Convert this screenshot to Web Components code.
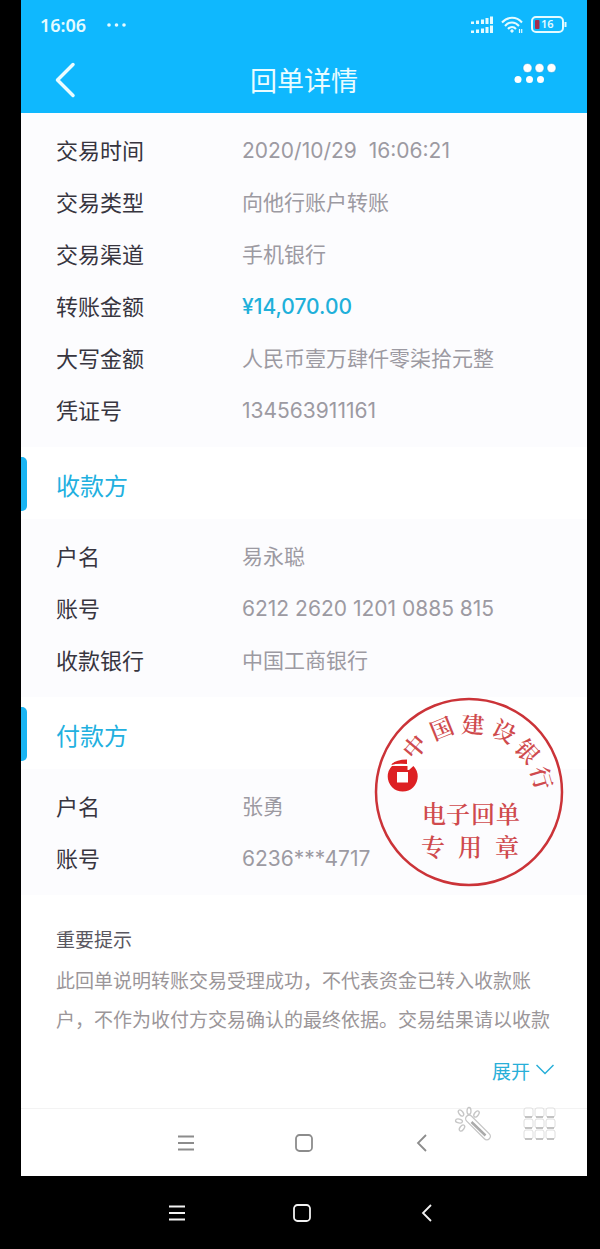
<!DOCTYPE html>
<html lang="zh-CN">
<head>
<meta charset="utf-8">
<meta name="viewport" content="width=device-width, initial-scale=1">
<title>回单详情</title>
<style>
  body {
    margin: 0;
    background: #000;
    font-family: Inter, "Noto Sans CJK SC", sans-serif;
  }
</style>
</head>
<body>
<receipt-app></receipt-app>

<script>
class StatusBar extends HTMLElement {
  constructor() {
    super();
    this.attachShadow({ mode: "open" });
    this.shadowRoot.innerHTML = `
      <style>
        :host {
          display: flex;
          align-items: center;
          height: 50px;
          padding: 0 20px 0 19px;
          color: #e4fbff;
        }
        .time {
          font: 600 18px/24px "Noto Sans", sans-serif;
        }
        .more { margin-left: 20px; }
        .icons {
          display: flex;
          align-items: center;
          gap: 8px;
          margin-left: auto;
        }
        svg { display: block; }
      </style>
      <span class="time">16:06</span>
      <svg class="more" width="20" height="6" viewBox="0 0 20 6" fill="currentColor">
        <circle cx="3" cy="3" r="1.800"/><circle cx="10.500" cy="3" r="1.800"/><circle cx="18" cy="3" r="1.800"/>
      </svg>
      <div class="icons">
        <svg width="22" height="18" viewBox="0 0 22 18" fill="currentColor">
          <path d="M0 5.500h3v2.500h-3zM5 4.500h3v3.500h-3zM10 3.500h3v4.500h-3zM14.500 2h3v6h-3zM19 .5h3v7.500h-3z"/>
          <path d="M0 14.500h3v2.500h-3zM5 13.500h3v3.500h-3zM10 12.500h3v4.500h-3zM14.500 11h3v6h-3zM19 9.500h3v7.500h-3z"/>
        </svg>
        <svg width="22" height="18" viewBox="0 0 22 18" fill="none" stroke="currentColor" stroke-width="2">
          <path d="M1 6.500C6.500 .2 15.500 .2 21 6.500M4 10C8 5.200 14 5.200 18 10M7 13C9.300 10.200 12.700 10.200 15 13"/>
          <circle cx="11" cy="15" r="1.200" fill="currentColor" stroke-width="1"/>
          <path d="M18.500 13v4M20.700 13v4" stroke-width="1.200"/>
        </svg>
        <svg width="36" height="18" viewBox="0 0 36 18">
          <rect x="1" y="1" width="31" height="15" rx="4" fill="none" stroke="currentColor" stroke-width="2"/>
          <path d="M33.500 6h2v5h-2z" fill="currentColor"/>
          <rect x="4" y="4" width="4.500" height="9" rx="1" fill="#a52c4c"/>
          <text x="10" y="12" font-family="Noto Sans, sans-serif" font-weight="600" font-size="11" fill="currentColor">16</text>
        </svg>
      </div>
    `;
  }
}
customElements.define("status-bar", StatusBar);

class TitleBar extends HTMLElement {
  constructor() {
    super();
    this.attachShadow({ mode: "open" });
    this.shadowRoot.innerHTML = `
      <style>
        :host {
          display: grid;
          grid-template-columns: 48px 1fr 48px;
          align-items: center;
          height: 63px;
          padding: 0 28px 0 28px;
          color: #eafcff;
        }
        h1 {
          margin: 0;
          font-size: 27px;
          font-weight: 400;
          line-height: 60px;
          text-align: center;
        }
        button {
          display: flex;
          padding: 0;
          border: 0;
          background: none;
          color: inherit;
        }
        .back { padding: 0 0 4px 6px; }
        .menu { justify-content: flex-end; padding-bottom: 16px; }
      </style>
      <button class="back" type="button" aria-label="返回">
        <svg width="22" height="36" viewBox="0 0 22 36" fill="none" stroke="currentColor" stroke-width="3.500" stroke-linecap="round" stroke-linejoin="round">
          <path d="M18 2.500L2.500 18L18 33.500"/>
        </svg>
      </button>
      <h1><slot></slot></h1>
      <button class="menu" type="button" aria-label="更多">
        <svg width="46" height="24" viewBox="0 0 46 24" fill="#fff">
          <g stroke="#0a92d2" stroke-opacity=".45">
            <circle cx="14.500" cy="6" r="4.500"/><circle cx="26.500" cy="6" r="4.500"/><circle cx="38.500" cy="6" r="4.500"/>
          </g>
          <circle cx="5" cy="17.500" r="3.500"/><circle cx="16.500" cy="17.500" r="3.500"/><circle cx="27.500" cy="17.500" r="3.500"/>
        </svg>
      </button>
    `;
  }
}
customElements.define("title-bar", TitleBar);

class DetailList extends HTMLElement {
  constructor() {
    super();
    this.attachShadow({ mode: "open" });
    this.shadowRoot.innerHTML = `
      <style>
        :host {
          display: block;
          padding: 12px 35px 10px;
          background: #fcfcfe;
        }
        dl { margin: 0; }
      </style>
      <dl><slot></slot></dl>
    `;
  }
}
customElements.define("detail-list", DetailList);

class DetailRow extends HTMLElement {
  constructor() {
    super();
    this.attachShadow({ mode: "open" });
    this.shadowRoot.innerHTML = `
      <style>
        :host {
          display: grid;
          grid-template-columns: 186px 1fr;
          line-height: 52px;
        }
        dt {
          font-size: 22px;
          color: #37353f;
        }
        dd {
          margin: 0;
          font-size: 21px;
          color: #9c9aa2;
          white-space: pre;
        }
        :host([accent]) dd {
          color: #1fb0da;
          font-weight: 500;
        }
      </style>
      <dt></dt><dd><slot></slot></dd>
    `;
    this.label = this.shadowRoot.querySelector("dt");
  }

  connectedCallback() {
    this.label.textContent = this.getAttribute("label");
  }
}
customElements.define("detail-row", DetailRow);

class SectionHeading extends HTMLElement {
  constructor() {
    super();
    this.attachShadow({ mode: "open" });
    this.shadowRoot.innerHTML = `
      <style>
        :host {
          display: block;
          padding: 10px 0 8px;
          background: #fff;
        }
        h2 {
          display: flex;
          align-items: center;
          gap: 29px;
          height: 54px;
          margin: 0;
          font-size: 24px;
          font-weight: 400;
          color: #22b0df;
        }
        h2::before {
          content: "";
          width: 6px;
          height: 54px;
          border-radius: 0 5px 5px 0;
          background: #19b4f2;
        }
      </style>
      <h2><slot></slot></h2>
    `;
  }
}
customElements.define("section-heading", SectionHeading);

class BankStamp extends HTMLElement {
  constructor() {
    super();
    this.attachShadow({ mode: "open" });
    // [character, x, y, rotation] along the upper rim
    const rim = [
      ["中", 41, 50, -50], ["国", 68, 32, -22], ["建", 99, 28, 3],
      ["设", 130, 35, 27], ["银", 153, 55, 48], ["行", 167, 81, 74],
    ];
    const rimText = rim.map(([ch, x, y, r]) =>
      `<text transform="translate(${x} ${y}) rotate(${r})" y="8">${ch}</text>`).join("");
    this.shadowRoot.innerHTML = `
      <style>
        :host { display: block; }
        svg { display: block; }
        text {
          font-family: "Noto Serif CJK SC", "Noto Sans CJK SC", serif;
          font-size: 23px;
          font-weight: 600;
          text-anchor: middle;
          fill: #cf4a4d;
        }
        .body text { font-size: 24px; }
      </style>
      <svg width="190" height="190" viewBox="0 0 190 190">
        <circle cx="95" cy="95" r="93" fill="none" stroke="#cb3338" stroke-width="2.500"/>
        ${rimText}
        <g fill="#dd2023">
          <path d="M39.400 69A15 15 0 1 1 18 69H33.500V73H35Z"/>
          <path d="M17 68Q21 62.500 33 62.500V67Q23 66 17 68Z"/>
        </g>
        <path d="M23 75h11v10.500h-11z" fill="#fff"/>
        <g class="body">
          <text x="60" y="126">电</text><text x="84" y="126">子</text><text x="109" y="126">回</text><text x="134" y="126">单</text>
          <text x="59" y="159">专</text><text x="96" y="159">用</text><text x="133" y="159">章</text>
        </g>
      </svg>
    `;
  }
}
customElements.define("bank-stamp", BankStamp);

class ImportantNotice extends HTMLElement {
  constructor() {
    super();
    this.attachShadow({ mode: "open" });
    this.shadowRoot.innerHTML = `
      <style>
        :host {
          display: flex;
          flex-direction: column;
          padding: 25px 33px 18px 35px;
          background: #fff;
          font-size: 19px;
        }
        h3 {
          margin: 0;
          font-size: 19px;
          font-weight: 400;
          line-height: 42px;
          color: #59575f;
        }
        p {
          margin: 0;
          line-height: 39px;
          color: #9b9699;
        }
        button {
          display: flex;
          align-items: center;
          align-self: flex-end;
          gap: 6px;
          height: 40px;
          margin-top: 10px;
          padding: 0;
          border: 0;
          background: none;
          font: inherit;
          color: #28afd8;
        }
      </style>
      <h3>重要提示</h3>
      <p><slot></slot></p>
      <button type="button">展开
        <svg width="18" height="12" viewBox="0 0 18 12" fill="none" stroke="currentColor" stroke-width="1.500">
          <path d="M.5 1L9 9.500L17.500 1"/>
        </svg>
      </button>
    `;
  }
}
customElements.define("important-notice", ImportantNotice);

class NavBar extends HTMLElement {
  constructor() {
    super();
    this.attachShadow({ mode: "open" });
    this.shadowRoot.innerHTML = `
      <style>
        :host {
          display: flex;
          justify-content: center;
          align-items: center;
          gap: 70px;
        }
        button {
          display: flex;
          justify-content: center;
          width: 48px;
          padding: 0;
          border: 0;
          background: none;
          color: inherit;
        }
        svg {
          fill: none;
          stroke: currentColor;
          stroke-width: 1.800;
        }
      </style>
      <button type="button" aria-label="最近任务">
        <svg width="18" height="18" viewBox="0 0 18 18"><path d="M1 2.500h16M1 9h16M1 15.500h16"/></svg>
      </button>
      <button type="button" aria-label="主屏幕">
        <svg width="18" height="18" viewBox="0 0 18 18"><rect x="1" y="1" width="16" height="16" rx="3.500"/></svg>
      </button>
      <button type="button" aria-label="返回">
        <svg width="18" height="18" viewBox="0 0 18 18"><path d="M13 1L5 9L13 17"/></svg>
      </button>
    `;
  }
}
customElements.define("nav-bar", NavBar);

class FloatingTools extends HTMLElement {
  constructor() {
    super();
    this.attachShadow({ mode: "open" });
    let cells = "";
    for (let row = 0; row < 3; row++) {
      for (let col = 0; col < 3; col++) {
        const x = 2 + col * 11;
        const y = 2 + row * 11;
        cells += `<rect x="${x}" y="${y}" width="9" height="9" rx="2" fill="#fff" stroke="#dedede"/>
          <path d="M${x + 1} ${y + 9}h7" stroke="#b5b5b5" stroke-width="1.500"/>`;
      }
    }
    this.shadowRoot.innerHTML = `
      <style>
        :host {
          display: flex;
          gap: 30px;
        }
        button {
          display: flex;
          padding: 0;
          border: 0;
          background: none;
        }
      </style>
      <button type="button" aria-label="魔棒">
        <svg width="38" height="38" viewBox="0 0 38 38" fill="#fff" stroke="#c6c6c6" stroke-width="1.300">
          <ellipse cx="15" cy="5" rx="2" ry="3.500"/>
          <ellipse cx="7" cy="7" rx="2" ry="3.500" transform="rotate(-38 7 7)"/>
          <ellipse cx="22.500" cy="8" rx="2" ry="3.500" transform="rotate(38 22.500 8)"/>
          <ellipse cx="5" cy="15" rx="2" ry="3.500" transform="rotate(-80 5 15)"/>
          <ellipse cx="8" cy="22" rx="2" ry="3.500" transform="rotate(38 8 22)"/>
          <rect x="8" y="18" width="32" height="7" rx="3.500" transform="rotate(45 24 21.500)"/>
          <path d="M17.500 16L31.500 29.500" stroke="#aaa" stroke-width="2.500"/>
        </svg>
      </button>
      <button type="button" aria-label="九宫格">
        <svg width="36" height="36" viewBox="0 0 36 36">${cells}</svg>
      </button>
    `;
  }
}
customElements.define("floating-tools", FloatingTools);

class ReceiptApp extends HTMLElement {
  constructor() {
    super();
    this.attachShadow({ mode: "open" });
    this.shadowRoot.innerHTML = `
      <style>
        :host { display: block; }
        .screen {
          margin: 0 13px 0 21px;
          background: #fff;
        }
        header { background: #0fb8fe; }
        .payer { position: relative; }
        bank-stamp {
          position: absolute;
          top: 0;
          right: 23px;
        }
        .footer {
          position: relative;
          border-top: 1px solid #f3f3f3;
        }
        floating-tools {
          position: absolute;
          top: -3px;
          right: 29px;
        }
        .inner {
          height: 67px;
          color: #8c8c8c;
        }
        .outer {
          height: 73px;
          padding-left: 4px;
          gap: 77px;
          color: #f2f2f2;
        }
      </style>
      <div class="screen">
        <header>
          <status-bar></status-bar>
          <title-bar>回单详情</title-bar>
        </header>
        <main>
          <detail-list>
            <detail-row label="交易时间">2020/10/29  16:06:21</detail-row>
            <detail-row label="交易类型">向他行账户转账</detail-row>
            <detail-row label="交易渠道">手机银行</detail-row>
            <detail-row label="转账金额" accent>¥14,070.00</detail-row>
            <detail-row label="大写金额">人民币壹万肆仟零柒拾元整</detail-row>
            <detail-row label="凭证号">134563911161</detail-row>
          </detail-list>
          <section>
            <section-heading>收款方</section-heading>
            <detail-list>
              <detail-row label="户名">易永聪</detail-row>
              <detail-row label="账号">6212 2620 1201 0885 815</detail-row>
              <detail-row label="收款银行">中国工商银行</detail-row>
            </detail-list>
          </section>
          <section class="payer">
            <section-heading>付款方</section-heading>
            <detail-list>
              <detail-row label="户名">张勇</detail-row>
              <detail-row label="账号">6236***4717</detail-row>
            </detail-list>
            <bank-stamp></bank-stamp>
          </section>
          <important-notice>此回单说明转账交易受理成功，不代表资金已转入收款账户，不作为收付方交易确认的最终依据。交易结果请以收款</important-notice>
        </main>
        <div class="footer">
          <nav-bar class="inner"></nav-bar>
          <floating-tools></floating-tools>
        </div>
      </div>
      <nav-bar class="outer"></nav-bar>
    `;
  }
}
customElements.define("receipt-app", ReceiptApp);
</script>
</body>
</html>
